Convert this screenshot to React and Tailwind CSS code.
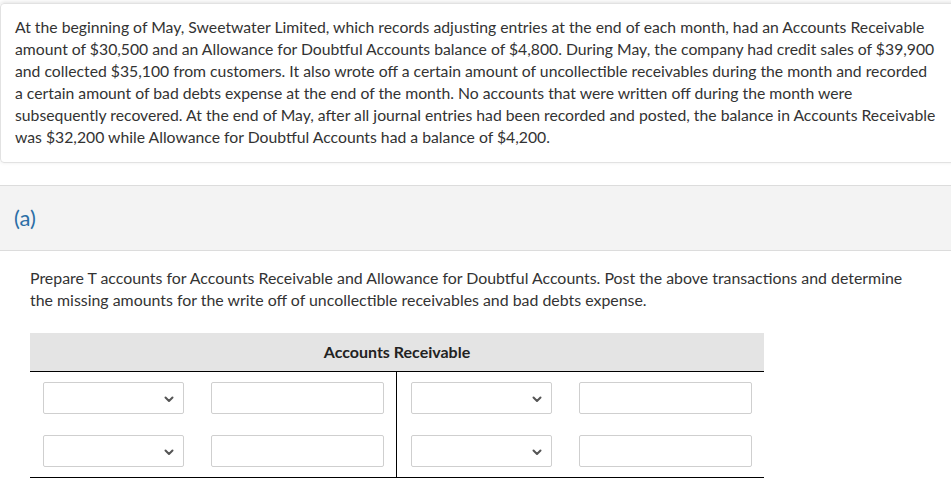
import React from "react";

function Chevron() {
  return (
    <svg width="10" height="7" viewBox="0 0 10 7" className="absolute right-[9px] top-[13px]">
      <path d="M1.5 1.5 L5 5 L8.5 1.5" fill="none" stroke="#555" strokeWidth="2" strokeLinecap="round" strokeLinejoin="round" />
    </svg>
  );
}

function SelectBox() {
  return (
    <div className="relative w-[141px] h-[32px] border border-[#cfcfcf] rounded-[2px] bg-white">
      <Chevron />
    </div>
  );
}

function TextBox() {
  return <div className="w-[173px] h-[32px] border border-[#cfcfcf] rounded-[2px] bg-white" />;
}

function Half({ left }) {
  return (
    <div className={`flex flex-col gap-[21px] py-[10px] ${left ? "pl-[13px] border-r border-black" : "pl-[14px]"}`}>
      {[0, 1].map((i) => (
        <div key={i} className="flex items-center gap-[27px]">
          <SelectBox />
          <TextBox />
        </div>
      ))}
    </div>
  );
}

const lines = [
  "At the beginning of May, Sweetwater Limited, which records adjusting entries at the end of each month, had an Accounts Receivable",
  "amount of $30,500 and an Allowance for Doubtful Accounts balance of $4,800. During May, the company had credit sales of $39,900",
  "and collected $35,100 from customers. It also wrote off a certain amount of uncollectible receivables during the month and recorded",
  "a certain amount of bad debts expense at the end of the month. No accounts that were written off during the month were",
  "subsequently recovered. At the end of May, after all journal entries had been recorded and posted, the balance in Accounts Receivable",
  "was $32,200 while Allowance for Doubtful Accounts had a balance of $4,200.",
];

export default function App() {
  return (
    <div className="w-[951px] h-[479px] overflow-hidden bg-white text-[#333] pt-[3px]" style={{ fontFamily: "Lato, 'Open Sans', sans-serif" }}>
      <div className="border border-[#e2e2e2] rounded-[4px] shadow-[0_-1px_4px_rgba(0,0,0,0.12)] pl-[14px] pr-[0px] pt-[12px] pb-[14px] text-[15.75px] leading-[22px] -mr-[4px] whitespace-nowrap">
        {lines.map((l, i) => (
          <div key={i}>{l}</div>
        ))}
      </div>

      <div className="mt-[22px] h-[66px] bg-[#f3f3f3] border-y border-[#dcdcdc] flex items-center pl-[14px]">
        <span className="text-[22px] text-[#2b6ea6] leading-none">(a)</span>
      </div>

      <div className="pl-[30px] pr-[30px] pt-[16px] text-[15.9px] leading-[22px]">
        Prepare T accounts for Accounts Receivable and Allowance for Doubtful Accounts. Post the above transactions and determine the missing amounts for the write off of uncollectible receivables and bad debts expense.
      </div>

      <div className="ml-[30px] mt-[22px] w-[734px]">
        <div className="h-[38px] bg-[#e4e4e4] flex items-center justify-center font-bold text-[16px] text-[#222]">
          Accounts Receivable
        </div>
        <div className="grid grid-cols-2 border-t border-b border-black">
          <Half left />
          <Half />
        </div>
      </div>
    </div>
  );
}
